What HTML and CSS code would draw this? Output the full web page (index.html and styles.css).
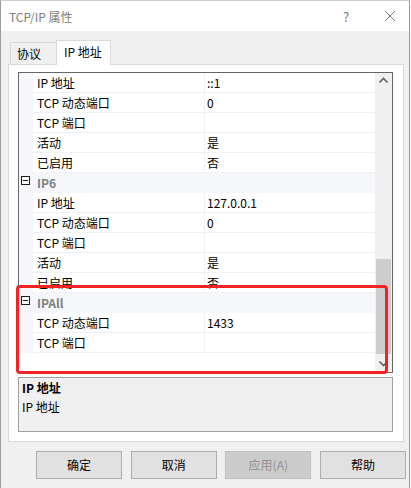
FILE: index.html
```html
<!DOCTYPE html>
<html lang="zh-CN">
<head>
<meta charset="utf-8">
<title>TCP/IP 属性</title>
<link rel="stylesheet" href="styles.css">
</head>
<body>
<div class="window">
  <div class="titlebar">
    <span class="title">TCP/IP 属性</span>
    <span class="help">?</span>
    <span class="close"><svg width="12" height="12" viewBox="0 0 12 12"><path d="M1 1L11 11M11 1L1 11" stroke="#7a7a7a" stroke-width="1" fill="none"/></svg></span>
  </div>
  <div class="tabstrip">
    <div class="tab">协议</div>
    <div class="tab active">IP 地址</div>
  </div>
  <div class="panel">
    <div class="grid">
      <div class="rows">
        <div class="row"><div class="margin"></div><div class="name">IP 地址</div><div class="val">::1</div></div>
        <div class="row"><div class="margin"></div><div class="name">TCP 动态端口</div><div class="val">0</div></div>
        <div class="row"><div class="margin"></div><div class="name">TCP 端口</div><div class="val"></div></div>
        <div class="row"><div class="margin"></div><div class="name">活动</div><div class="val">是</div></div>
        <div class="row"><div class="margin"></div><div class="name">已启用</div><div class="val">否</div></div>
        <div class="row cat"><div class="margin"><svg class="box" width="9" height="9" viewBox="0 0 9 9"><rect x="0.5" y="0.5" width="8" height="8" fill="#fff" stroke="#1e1e1e"/><path d="M2 4.5H7" stroke="#1e1e1e"/></svg></div><div class="catname">IP6</div></div>
        <div class="row"><div class="margin"></div><div class="name">IP 地址</div><div class="val">127.0.0.1</div></div>
        <div class="row"><div class="margin"></div><div class="name">TCP 动态端口</div><div class="val">0</div></div>
        <div class="row"><div class="margin"></div><div class="name">TCP 端口</div><div class="val"></div></div>
        <div class="row"><div class="margin"></div><div class="name">活动</div><div class="val">是</div></div>
        <div class="row"><div class="margin"></div><div class="name">已启用</div><div class="val">否</div></div>
        <div class="row cat"><div class="margin"><svg class="box" width="9" height="9" viewBox="0 0 9 9"><rect x="0.5" y="0.5" width="8" height="8" fill="#fff" stroke="#1e1e1e"/><path d="M2 4.5H7" stroke="#1e1e1e"/></svg></div><div class="catname">IPAll</div></div>
        <div class="row"><div class="margin"></div><div class="name">TCP 动态端口</div><div class="val">1433</div></div>
        <div class="row"><div class="margin"></div><div class="name">TCP 端口</div><div class="val"></div></div>
      </div>
      <div class="scrollbar">
        <div class="sb-btn"><svg width="17" height="17" viewBox="0 0 17 17"><path d="M4.5 9.5L8.5 5.5L12.5 9.5" stroke="#606060" stroke-width="1.6" fill="none"/></svg></div>
        <div class="track"><div class="thumb"></div></div>
        <div class="sb-btn"><svg width="17" height="17" viewBox="0 0 17 17"><path d="M4.5 6.5L8.5 10.5L12.5 6.5" stroke="#606060" stroke-width="1.6" fill="none"/></svg></div>
      </div>
    </div>
    <div class="desc">
      <div class="desc-title">IP 地址</div>
      <div class="desc-text">IP 地址</div>
    </div>
  </div>
  <div class="buttons">
    <div class="btn">确定</div>
    <div class="btn">取消</div>
    <div class="btn disabled">应用(A)</div>
    <div class="btn">帮助</div>
  </div>
  <div class="highlight"></div>
</div>
</body>
</html>
```
FILE: styles.css
```css
html, body {
  margin: 0;
  padding: 0;
  background: #ffffff;
}
body {
  font-family: "Noto Sans CJK SC", "Microsoft YaHei", sans-serif;
  font-size: 12px;
  color: #000;
}
.window {
  position: relative;
  width: 410px;
  height: 488px;
  box-sizing: border-box;
  border-left: 1px solid #9a9a9a;
  border-right: 1px solid #9a9a9a;
  border-top: 1px solid #cfcfcf;
  background: #f0f0f0;
}
.titlebar {
  height: 30px;
  background: #fff;
  display: flex;
  align-items: center;
  padding-left: 8px;
  color: #7f7f7f;
  font-size: 12px;
}
.title {
  flex: 1;
}
.help {
  width: 50px;
  text-align: center;
  font-size: 13px;
  color: #7a7a7a;
}
.close {
  width: 38px;
  display: flex;
  justify-content: center;
  align-items: center;
}
.tabstrip {
  margin-top: 9px;
  padding-left: 9px;
  height: 24px;
  display: flex;
  align-items: flex-end;
}
.tab {
  box-sizing: border-box;
  height: 22px;
  border: 1px solid #d9d9d9;
  border-bottom: none;
  border-right: none;
  background: #f0f0f0;
  padding-left: 6px;
  width: 46px;
  line-height: 21px;
}
.tab.active {
  height: 25px;
  width: 55px;
  border-right: 1px solid #d9d9d9;
  background: #fff;
  margin-bottom: -1px;
  position: relative;
  z-index: 1;
  padding-left: 7px;
  line-height: 22px;
}
.panel {
  margin-left: 7px;
  width: 396px;
  height: 378px;
  box-sizing: border-box;
  border: 1px solid #d9d9d9;
  background: #fff;
  padding: 7px 10px 9px 9px;
}
.grid {
  height: 301px;
  box-sizing: border-box;
  border: 1px solid #666666;
  display: flex;
  background: #fff;
}
.rows {
  flex: 1;
  overflow: hidden;
}
.row {
  display: flex;
  height: 20px;
}
.margin {
  width: 14px;
  flex: none;
  background: #f5f7fa;
}
.name {
  width: 172px;
  flex: none;
  box-sizing: border-box;
  border-right: 1px solid #eff1f4;
  border-bottom: 1px solid #eff1f4;
  padding-left: 4px;
  line-height: 19px;
  white-space: nowrap;
}
.val {
  flex: 1;
  box-sizing: border-box;
  border-bottom: 1px solid #eff1f4;
  padding-left: 2px;
  line-height: 19px;
}
.cat .margin {
  position: relative;
}
.box {
  display: block;
  margin: 3px 0 0 2px;
}
.catname {
  flex: 1;
  background: #f5f7fa;
  padding-left: 4px;
  font-weight: bold;
  color: #808080;
  line-height: 19px;
}
.scrollbar {
  width: 17px;
  flex: none;
  background: #f0f0f0;
  display: flex;
  flex-direction: column;
}
.sb-btn {
  height: 17px;
}
.sb-btn svg {
  display: block;
}
.track {
  flex: 1;
}
.thumb {
  margin: 169px 1px 0 1px;
  height: 95px;
  background: #cdcdcd;
}
.desc {
  margin-top: 4px;
  height: 55px;
  box-sizing: border-box;
  border: 1px solid #a0a0a0;
  background: #f0f0f0;
  padding: 1px 0 0 3px;
}
.desc-title {
  font-weight: bold;
  line-height: 18px;
}
.desc-text {
  line-height: 20px;
}
.buttons {
  margin-top: 9px;
  padding-left: 35px;
  width: 370px;
  display: flex;
  justify-content: space-between;
}
.btn {
  width: 86px;
  height: 28px;
  box-sizing: border-box;
  border: 1px solid #adadad;
  background: #e1e1e1;
  text-align: center;
  line-height: 26px;
}
.btn.disabled {
  background: #cccccc;
  border-color: #bfbfbf;
  color: #8f8f8f;
}
.highlight {
  position: absolute;
  left: 15px;
  top: 284px;
  width: 372px;
  height: 89px;
  box-sizing: border-box;
  border: 3px solid #f52222;
  border-radius: 4px;
}
```
